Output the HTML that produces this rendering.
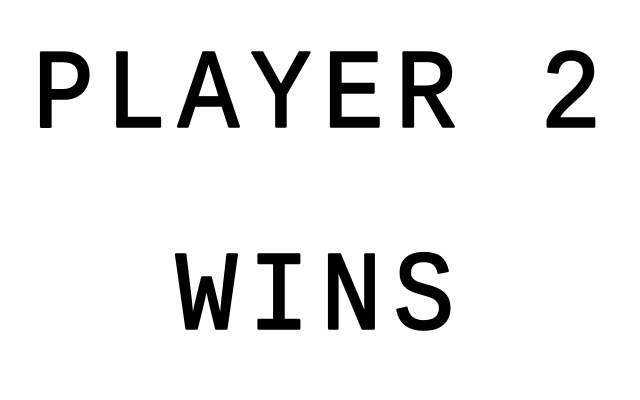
<!DOCTYPE html>
<html>
<head>
<meta charset="utf-8">
<style>
html,body{margin:0;padding:0;background:#fff;width:640px;height:400px;overflow:hidden;}
svg{display:block;}
</style>
</head>
<body>
<svg width="640" height="400" viewBox="0 0 640 400" xmlns="http://www.w3.org/2000/svg">
<rect width="640" height="400" fill="#fff"/>
<g font-family="Liberation Mono, DejaVu Sans Mono, monospace" font-size="118" fill="#000" stroke="#000" stroke-width="2.6" stroke-linejoin="round" stroke-linecap="round">
<text transform="translate(33,126.5) scale(0.86,0.95)" x="0" y="0" letter-spacing="13.5">PLAYER 2</text>
<text transform="translate(176,328.5) scale(0.86,0.95)" x="0" y="0" letter-spacing="13.5">WINS</text>
</g>
</svg>
</body>
</html>
